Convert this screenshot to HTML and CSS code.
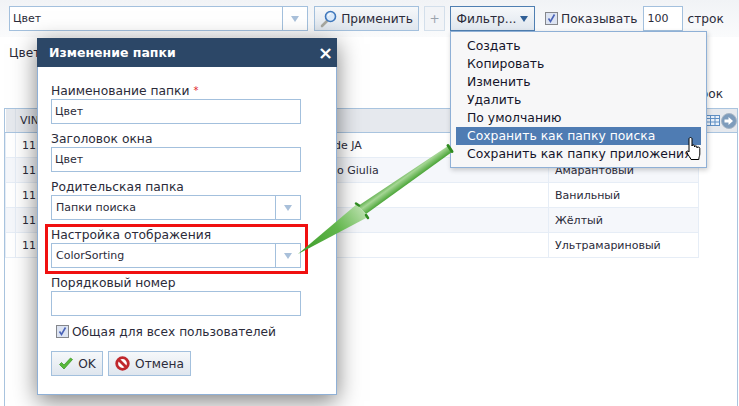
FILE: index.html
```html
<!DOCTYPE html>
<html lang="ru">
  <head>
    <meta charset="utf-8">
    <title>Изменение папки</title>
    <link rel="stylesheet" href="styles.css">
  </head>
  <body>
    <div class="page">
      <div class="toolbar">
        <div class="select select-main"><span class="select-text">Цвет</span><span class="select-btn"><i class="tri"></i></span></div>
        <div class="btn btn-apply">
          <svg width="17" height="18" viewBox="0 0 17 18"><path d="M2 16l5-5" stroke="#a8a8a0" stroke-width="2.6" stroke-linecap="round"/><circle cx="10.5" cy="6.5" r="5" fill="#dbeafa" stroke="#3f78bd" stroke-width="1.6"/><path d="M8 6a3 3 0 0 1 3-2.5" stroke="#fff" fill="none"/></svg>
          Применить
        </div>
        <div class="btn btn-plus">+</div>
        <div class="btn btn-filter">Фильтр...<i class="caret"></i></div>
        <label class="check check-show">
          <svg class="box" width="13" height="13" viewBox="0 0 13 13"><rect x=".5" y=".5" width="12" height="12" fill="#dde4f2" stroke="#85878c"/><path d="M3.5 6.5l2 3 4-7" fill="none" stroke="#4a63b8" stroke-width="1.6"/></svg>
          Показывать
        </label>
        <input class="input input-count" value="100">
        <span class="rows-word">строк</span>
      </div>
      <div class="folder-title">Цвет</div>
      <div class="summary">строк</div>
      <div class="grid">
        <div class="grid-tools">
          <svg width="15" height="11" viewBox="0 0 15 11"><rect x=".5" y=".5" width="14" height="10" fill="#eaf1fa" stroke="#5f8fc4"/><path d="M.5 3.5h14M.5 7h14M5.5 .5v10M10 .5v10" stroke="#5f8fc4"/></svg>
          <svg width="16" height="16" viewBox="0 0 16 16"><circle cx="8" cy="8" r="7.5" fill="#7e9cbc" stroke="#a8b6c4"/><path d="M3.5 6.5h4V4l4.5 4-4.5 4V9.5h-4z" fill="#fff"/></svg>
        </div>
        <table class="grid-table">
          <colgroup><col class="c-mark"><col class="c-vin"><col class="c-model"><col class="c-color"></colgroup>
          <thead><tr><th></th><th>VIN</th><th></th><th></th></tr></thead>
          <tbody>
            <tr><td></td><td>1111111111</td><td>Lexus Verde JA</td><td>Белый</td></tr>
            <tr><td></td><td>1111111112</td><td>Alfa Romeo Giulia</td><td>Амарантовый</td></tr>
            <tr><td></td><td>1111111113</td><td></td><td>Ванильный</td></tr>
            <tr><td></td><td>1111111114</td><td></td><td>Жёлтый</td></tr>
            <tr><td></td><td>1111111115</td><td></td><td>Ультрамариновый</td></tr>
          </tbody>
        </table>
      </div>

      <div class="menu">
        <div class="menu-item">Создать</div>
        <div class="menu-item">Копировать</div>
        <div class="menu-item">Изменить</div>
        <div class="menu-item">Удалить</div>
        <div class="menu-item">По умолчанию</div>
        <div class="menu-item active">Сохранить как папку поиска</div>
        <div class="menu-item">Сохранить как папку приложения</div>
      </div>

      <div class="dialog">
        <div class="dialog-head"><span>Изменение папки</span><span class="dialog-close">×</span></div>
        <div class="dialog-body">
          <div class="field-label">Наименование папки <i class="req">*</i></div>
          <input class="input" value="Цвет">
          <div class="field-label">Заголовок окна</div>
          <input class="input" value="Цвет">
          <div class="field-label">Родительская папка</div>
          <div class="select"><span class="select-text">Папки поиска</span><span class="select-btn"><i class="tri"></i></span></div>
          <div class="field-label">Настройка отображения</div>
          <div class="select"><span class="select-text">ColorSorting</span><span class="select-btn"><i class="tri"></i></span></div>
          <div class="field-label">Порядковый номер</div>
          <input class="input" value="">
          <label class="check check-all">
            <svg class="box" width="13" height="13" viewBox="0 0 13 13"><rect x=".5" y=".5" width="12" height="12" fill="#dde4f2" stroke="#85878c"/><path d="M3.5 6.5l2 3 4-7" fill="none" stroke="#4a63b8" stroke-width="1.6"/></svg>
            Общая для всех пользователей
          </label>
          <div class="dialog-actions">
            <div class="btn btn-ok">
              <svg width="16" height="14" viewBox="0 0 16 14"><path d="M1.5 7.500l4.500 4.500 8.500-9.500-2-1.500-6.500 7-2.500-2.500z" fill="#58b83a" stroke="#3f9a2b" stroke-width=".8"/></svg>
              OK
            </div>
            <div class="btn btn-cancel">
              <svg width="15" height="15" viewBox="0 0 15 15"><circle cx="7.5" cy="7.5" r="5.8" fill="#fff" stroke="#c0282d" stroke-width="2.8"/><path d="M3.5 3.5l8 8" stroke="#c0282d" stroke-width="2.8"/></svg>
              Отмена
            </div>
          </div>
        </div>
      </div>

      <div class="highlight"></div>

      <svg class="arrow" width="739" height="406" viewBox="0 0 739 406">
        <defs>
          <linearGradient id="arrow-fill" gradientUnits="userSpaceOnUse" x1="398" y1="174" x2="406" y2="185">
            <stop offset="0" stop-color="#3f9d2c"/>
            <stop offset=".5" stop-color="#a5d694"/>
            <stop offset="1" stop-color="#4da63a"/>
          </linearGradient>
          <linearGradient id="arrow-head" gradientUnits="userSpaceOnUse" x1="300" y1="254" x2="362" y2="210">
            <stop offset="0" stop-color="#3c9c28"/>
            <stop offset=".6" stop-color="#62b64c"/>
            <stop offset="1" stop-color="#b4dda6"/>
          </linearGradient>
        </defs>
        <path d="M358 206L448 146L452 152L366 214Z" fill="url(#arrow-fill)"/>
        <path d="M298 254L357 204L368 217Z" fill="url(#arrow-head)"/>
        <path d="M448 145.5L452 151.5" stroke="#2f8a20" stroke-width="3" stroke-linecap="round"/>
        <path d="M356 203.5L359 205.5M366 215L368 218" stroke="#2f8a20" stroke-width="2.5" stroke-linecap="round"/>
      </svg>

      <svg class="hand" width="16" height="24" viewBox="0 0 16 24"><path d="M3 2c0-2 3-2 3 0v7c0-1.5 2.5-1.5 2.5 0v1c0-1.5 2.5-1.5 2.5 0v1c0-1.3 2.8-1.3 2.8.3V17c0 2-1 3-1 5.5H5c-.5-2-3-4-4-7-.5-1.5 1-2.5 2-.5z" fill="#fff" stroke="#000"/></svg>
    </div>
  </body>
</html>
```

FILE: styles.css
```css
html, body {
  margin: 0;
  padding: 0;
  background: #fff;
}
.page {
  position: relative;
  width: 739px;
  height: 406px;
  overflow: hidden;
  font-family: "DejaVu Sans", Verdana, sans-serif;
  font-size: 11px;
  color: #2b2b3a;
}

/* toolbar */
.toolbar {
  display: flex;
  align-items: center;
  height: 25px;
  padding: 6px 0 6px 9px;
  background: linear-gradient(#f1f3f6, #fafbfc);
}
.input {
  display: block;
  box-sizing: border-box;
  width: 250px;
  height: 25px;
  margin: 0;
  padding: 0 3px;
  border: 1px solid #a3c0dd;
  background: #fff;
  font: inherit;
  color: inherit;
  outline: none;
}
.select {
  display: flex;
  box-sizing: border-box;
  width: 250px;
  height: 25px;
  border: 1px solid #a3c0dd;
  background: #fff;
}
.select-text {
  flex: 1;
  padding-left: 4px;
  line-height: 23px;
}
.select-btn {
  display: flex;
  align-items: center;
  justify-content: center;
  width: 24px;
  border-left: 1px solid #a3c0dd;
}
.tri {
  width: 0;
  height: 0;
  border-style: solid;
  border-width: 6px 4.5px 0;
  border-color: #a9c0da transparent transparent;
}
.select-main {
  width: 299px;
}
.select-main .select-text {
  padding-left: 3px;
}
.btn {
  display: flex;
  align-items: center;
  justify-content: center;
  box-sizing: border-box;
  height: 25px;
  border: 1px solid #a3c0dd;
  background: linear-gradient(#f6f8fa, #dfe6ee);
  font-size: 12.2px;
  white-space: nowrap;
}
.btn-apply {
  width: 105px;
  margin-left: 6px;
  gap: 4px;
}
.btn-plus {
  width: 21px;
  margin-left: 5px;
  border-color: #d3dfeb;
  background: #f2f4f7;
  color: #9aa3ad;
}
.btn-filter {
  width: 85px;
  margin-left: 5px;
  gap: 4px;
  border-color: #4f7fb2;
}
.caret {
  width: 0;
  height: 0;
  border-style: solid;
  border-width: 6px 4.5px 0;
  border-color: #2f5f96 transparent transparent;
}
.check {
  display: flex;
  align-items: center;
  gap: 3px;
  font-size: 12.2px;
  white-space: nowrap;
}
.check-show {
  margin-left: 10px;
}
.input-count {
  width: 40px;
  margin-left: 5px;
  padding-left: 4px;
}
.rows-word {
  margin-left: 5px;
  font-size: 12.2px;
}

/* text rows above the grid */
.folder-title {
  height: 19px;
  padding: 7px 0 0 9px;
  font-size: 12.2px;
  line-height: 19px;
}
.summary {
  height: 22px;
  padding-top: 20px;
  padding-right: 16px;
  font-size: 12.2px;
  line-height: 22px;
  text-align: right;
}

/* grid */
.grid {
  position: relative;
  box-sizing: border-box;
  width: 734px;
  height: 298px;
  margin-top: 3px;
  margin-left: 4px;
  border: 1px solid #a9c4df;
  border-bottom: 0;
}
.grid-tools {
  position: absolute;
  top: 0;
  right: 0;
  display: flex;
  align-items: center;
  justify-content: flex-end;
  gap: 1px;
  box-sizing: border-box;
  width: 38px;
  height: 24px;
  background: #e6e9ee;
  border-bottom: 1px solid #a9c4df;
}
.grid-table {
  width: 694px;
  border-collapse: collapse;
  table-layout: fixed;
}
.c-mark { width: 10px; }
.c-vin { width: 259px; }
.c-color { width: 150px; }
.grid-table th {
  height: 23px;
  padding: 0 0 0 4px;
  background: #e6e9ee;
  border-right: 1px solid #d9dfe7;
  border-bottom: 1px solid #a9c4df;
  font-weight: normal;
  text-align: left;
}
.grid-table td {
  height: 24px;
  padding: 0 0 0 6px;
  border: 1px solid #e6edf6;
  white-space: nowrap;
  overflow: hidden;
}
.grid-table tbody tr:nth-child(even) td {
  background: #f5f7fb;
}

/* dropdown */
.menu {
  position: absolute;
  left: 450px;
  top: 31px;
  box-sizing: border-box;
  width: 257px;
  height: 137px;
  padding: 5px;
  border: 1px solid #8fb0d6;
  background: #f7f7f8;
  box-shadow: 1px 2px 5px rgba(0, 0, 0, .2);
  font-size: 12.4px;
  color: #14142a;
}
.menu-item {
  height: 18px;
  padding-left: 11px;
  line-height: 18px;
  white-space: nowrap;
}
.menu-item.active {
  background: #4f7cb3;
  color: #fff;
}

/* dialog */
.dialog {
  position: absolute;
  left: 37px;
  top: 38px;
  width: 300px;
  box-shadow: 0 6px 22px rgba(0, 0, 0, .5);
}
.dialog-head {
  display: flex;
  justify-content: space-between;
  height: 29px;
  padding: 0 4px 0 12px;
  background: #2c4767;
  color: #fff;
  font-size: 12.5px;
  font-weight: bold;
  line-height: 29px;
}
.dialog-close {
  font-size: 18px;
}
.dialog-body {
  box-sizing: border-box;
  height: 328px;
  padding: 9px 13px 0;
  border: 1px solid #8fb0d6;
  border-top: 0;
  background: #fff;
}
.field-label {
  height: 16px;
  padding-top: 7px;
  font-size: 12.3px;
  line-height: 16px;
  white-space: nowrap;
}
.req {
  color: #e0202a;
  font-size: 10px;
  font-style: normal;
  vertical-align: top;
}
.check-all {
  height: 13px;
  margin: 9px 0 0 5px;
}
.dialog-actions {
  display: flex;
  gap: 5px;
  margin-top: 13px;
}
.btn-ok {
  width: 52px;
  gap: 4px;
}
.btn-cancel {
  width: 83px;
  gap: 5px;
}

/* annotations on top of the screenshot */
.highlight {
  position: absolute;
  left: 45px;
  top: 224px;
  box-sizing: border-box;
  width: 263px;
  height: 50px;
  border: 3px solid #f01010;
}
.arrow {
  position: absolute;
  left: 0;
  top: 0;
}
.hand {
  position: absolute;
  left: 686px;
  top: 137px;
}
```
